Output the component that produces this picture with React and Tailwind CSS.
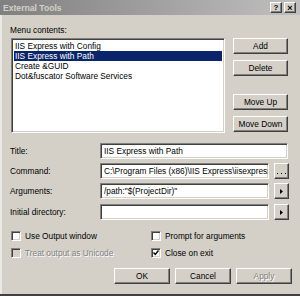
const raised =
  'flex items-center justify-center bg-[#d4d0c8] border border-t-white border-l-white border-r-[#404040] border-b-[#404040] shadow-[inset_-1px_-1px_0_#808080]'
const sunken =
  'bg-white border border-t-[#808080] border-l-[#808080] border-r-white border-b-white shadow-[inset_1px_1px_0_#404040,inset_-1px_-1px_0_#d4d0c8]'
const disabledText = 'text-[#808080] [text-shadow:1px_1px_0_#fff]'

const items = [
  'IIS Express with Config',
  'IIS Express with Path',
  'Create &GUID',
  'Dot&fuscator Software Services',
]

const Arrow = () => (
  <svg width="3" height="5" viewBox="0 0 3 5">
    <path d="M0 0 L3 2.5 L0 5 Z" fill="#000" />
  </svg>
)

const Dots = () => (
  <svg width="9" height="8" viewBox="0 0 9 8">
    <rect x="0" y="6" width="1" height="1" fill="#000" />
    <rect x="4" y="6" width="1" height="1" fill="#000" />
    <rect x="8" y="6" width="1" height="1" fill="#000" />
  </svg>
)

const Field = ({ value, className = 'w-[188px]' }) => (
  <div className={`${sunken} ${className} h-[16px] pl-[3px] flex items-center overflow-hidden whitespace-nowrap`}>
    {value}
  </div>
)

const FormRow = ({ label, value, button, className = '' }) => (
  <div className={`flex items-center h-[16px] ${className}`}>
    <div className="w-[90px]">{label}</div>
    {button ? (
      <div className="flex gap-[5px]">
        <Field value={value} className="w-[169px]" />
        <div className={`${raised} w-[15px] h-[16px]`}>{button}</div>
      </div>
    ) : (
      <Field value={value} />
    )}
  </div>
)

const Check = ({ label, checked, disabled }) => (
  <div className="flex items-center h-[10px] gap-[4px] pl-[1px]">
    <div
      className={`w-[10px] h-[10px] flex items-center justify-center border border-t-[#808080] border-l-[#808080] border-r-white border-b-white shadow-[inset_1px_1px_0_#404040,inset_-1px_-1px_0_#d4d0c8] ${
        disabled ? 'bg-[#d4d0c8]' : 'bg-white'
      }`}
    >
      {checked && (
        <svg width="6" height="6" viewBox="0 0 6 6">
          <polyline points="0.5,2.5 2.3,4.5 5.5,0.5" fill="none" stroke="#000" strokeWidth="1.4" />
        </svg>
      )}
    </div>
    <span className={disabled ? disabledText : ''}>{label}</span>
  </div>
)

export default function App() {
  return (
    <div className="w-[300px] h-[296px] bg-[#d4d0c8] flex flex-col border-b-2 border-b-[#404040] text-black text-[8.3px] leading-[10px] font-['Liberation_Sans',Arial,sans-serif]">
      {/* title bar, inactive */}
      <div className="h-[15px] flex items-center bg-gradient-to-r from-[#808080] to-[#c0c0c0] pl-[3px] pr-[4px]">
        <span className="font-bold text-[8.6px] text-[#d4d0c8]">External Tools</span>
        <div className="ml-auto flex gap-[2px]">
          <div className={`${raised} w-[12px] h-[11px] font-bold text-[8px]`}>?</div>
          <div className={`${raised} w-[12px] h-[11px] font-bold text-[9px]`}>×</div>
        </div>
      </div>

      <div className="flex-1 flex flex-col border-l-2 border-l-[#ebe9e4] pl-[8px] pt-[10px]">
        <div className="flex">
          <div className="w-[215px] flex flex-col">
            <div>Menu contents:</div>
            <div className={`${sunken} ml-[1px] mt-[3px] h-[95px] p-[2px] flex flex-col`}>
              {items.map((it, i) => (
                <div
                  key={it}
                  className={`h-[10px] pl-[1px] whitespace-nowrap ${i === 1 ? 'bg-[#0a246a] text-white' : ''}`}
                >
                  {it}
                </div>
              ))}
            </div>
          </div>
          <div className="ml-[8px] pt-[13px] flex flex-col">
            <div className={`${raised} w-[55px] h-[16px]`}>Add</div>
            <div className={`${raised} w-[55px] h-[16px] mt-[6px]`}>Delete</div>
            <div className={`${raised} w-[55px] h-[16px] mt-[18px]`}>Move Up</div>
            <div className={`${raised} w-[55px] h-[16px] mt-[6px]`}>Move Down</div>
          </div>
        </div>

        <FormRow label="Title:" value="IIS Express with Path" className="mt-[10px]" />
        <FormRow
          label="Command:"
          value="C:\Program Files (x86)\IIS Express\iisexpress.exe"
          button={<Dots />}
          className="mt-[4px]"
        />
        <FormRow label="Arguments:" value={'/path:"$(ProjectDir)"'} button={<Arrow />} className="mt-[4px]" />
        <FormRow label="Initial directory:" value="" button={<Arrow />} className="mt-[5px]" />

        <div className="flex mt-[11px]">
          <div className="w-[140px]">
            <Check label="Use Output window" />
          </div>
          <Check label="Prompt for arguments" />
        </div>
        <div className="flex mt-[7px]">
          <div className="w-[140px]">
            <Check label="Treat output as Unicode" disabled />
          </div>
          <Check label="Close on exit" checked />
        </div>

        <div className="flex justify-end gap-[5px] mt-[10px] pr-[8px]">
          <div className={`${raised} w-[56px] h-[16px]`}>OK</div>
          <div className={`${raised} w-[56px] h-[16px]`}>Cancel</div>
          <div className={`${raised} w-[56px] h-[16px] ${disabledText}`}>Apply</div>
        </div>
      </div>
    </div>
  )
}
